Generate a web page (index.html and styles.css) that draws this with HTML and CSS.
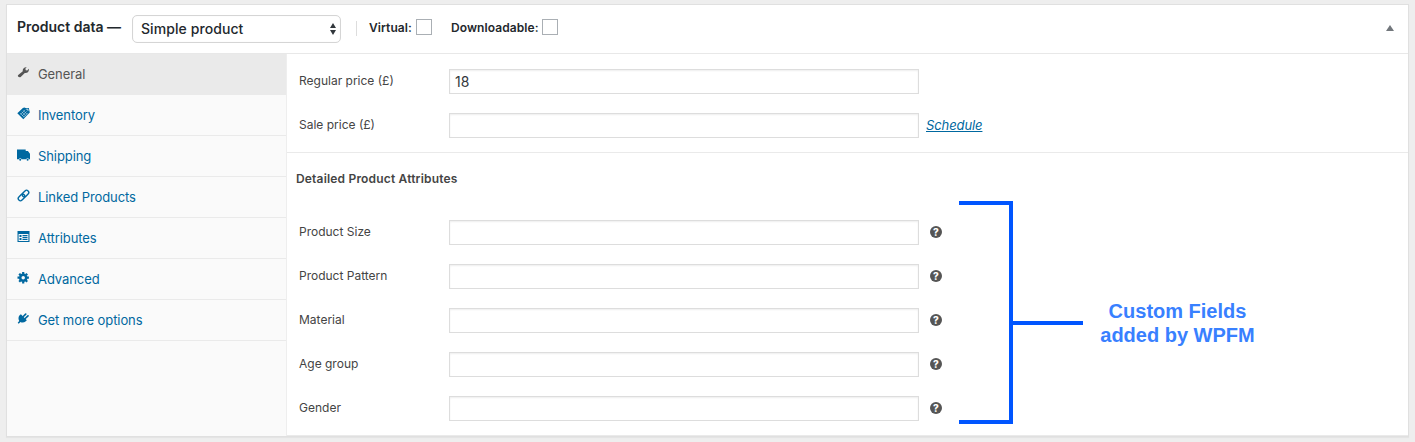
FILE: index.html
```html
<!DOCTYPE html>
<html lang="en">
<head>
  <meta charset="UTF-8" />
  <meta name="viewport" content="width=device-width, initial-scale=1.0"/>
  <title>Product data</title>
  <link rel="stylesheet" href="styles.css">
</head>
<body>

  <div class="postbox">
    <div class="header">
      <span class="title">Product data —</span>
      <div class="select">
        <span>Simple product</span>
        <svg width="6" height="12" viewBox="0 0 6 12"><path d="M3 0L6 5H0zM3 12L0 7H6z" fill="#32373c"/></svg>
      </div>
      <span class="divider"></span>
      <label class="check virtual"><span>Virtual:</span><input type="checkbox"></label>
      <label class="check downloadable"><span>Downloadable:</span><input type="checkbox"></label>
      <svg class="toggle" width="8" height="6" viewBox="0 0 8 6"><path d="M4 0L8 6H0z" fill="#72777c"/></svg>
    </div>

    <div class="inside">
      <ul class="tabs">
        <li class="active">
          <svg viewBox="0 0 13 13"><path d="M1.2 8.9L5.8 5.2C5.3 3 7.2.8 9.7 1.2L8.3 2.8 8.8 4.3 10.2 4.5 11.8 2.8C12.5 5.4 10.2 7.5 7.8 7L3.7 10.9C2.3 12-.1 10.3 1.2 8.9z"/></svg>
          <a>General</a>
        </li>
        <li>
          <svg viewBox="0 0 13 13"><path d="M.3 6.3L5.9.9 7.3.4 8.7 1 11.8 1 12.8 5.5 6.3 12.3z"/><path d="M3.1 6.1l4 4M4.6 4.7l4 4M6.1 3.3l4 4M3.6 7.4l4.6-4.6M5.1 8.9l4.6-4.6M6.6 10.3l4.2-4.4" stroke="#d5e5ee" stroke-width=".5" fill="none"/><path d="M9.1 2.2h1.9v1.9" stroke="#fff" stroke-width=".7" fill="none"/></svg>
          <a>Inventory</a>
        </li>
        <li>
          <svg viewBox="0 0 13 13"><path d="M0 1.4h8.7v1.7h2.2L13 5.8v5.4h-1a1.5 1.5 0 0 0-2.8 0H4.6a1.5 1.5 0 0 0-2.8 0H0z"/><circle cx="3.2" cy="11.8" r="1"/><circle cx="10.6" cy="11.8" r="1"/></svg>
          <a>Shipping</a>
        </li>
        <li>
          <svg viewBox="0 0 13 13"><g fill="none" stroke="#0068a0" stroke-width="1.4" transform="rotate(-45 6.5 6.5)"><rect x="0" y="4.3" width="7.4" height="4.4" rx="2.2"/><rect x="5.6" y="4.3" width="7.4" height="4.4" rx="2.2"/></g></svg>
          <a>Linked Products</a>
        </li>
        <li>
          <svg viewBox="0 0 13 13"><path fill-rule="evenodd" d="M.5 1h12v11H.5zM1.6 4v6.9h9.8V4z"/><path d="M2.5 5h2v2h-2zM2.5 8h2v2h-2zM5.5 5h5v1.2h-5zM5.5 7h5v1.2h-5zM5.5 9h5v1.1h-5z"/></svg>
          <a>Attributes</a>
        </li>
        <li>
          <svg viewBox="0 0 13 13"><circle cx="6.2" cy="6.7" r="3" fill="none" stroke="#0068a0" stroke-width="2.5"/><path d="M6.2 1v2M6.2 10.4v2M.5 6.7h2M9.9 6.7h2M2.2 2.7l1.4 1.4M8.8 9.3l1.4 1.4M2.2 10.7l1.4-1.4M8.8 4.1l1.4-1.4" stroke="#0068a0" stroke-width="2.2"/></svg>
          <a>Advanced</a>
        </li>
        <li>
          <svg viewBox="0 0 13 13"><path d="M2.6 3.2L3.9 2.2 9.8 8.2 8.8 9.3C7.2 10.6 5.1 10.9 3.5 10L1.7 11.7.7 10.7 2.2 8.9C1.2 7.2 1.2 4.8 2.6 3.2z"/><path d="M6.3 4.5L8.7 2.1M8.2 6.5L11 3.9" stroke="#0068a0" stroke-width="1.7" stroke-linecap="round"/></svg>
          <a>Get more options</a>
        </li>
      </ul>

      <div class="panel">
        <div class="group">
          <div class="field"><label>Regular price (£)</label><input type="text" value="18"></div>
          <div class="field"><label>Sale price (£)</label><input type="text"><a class="schedule">Schedule</a></div>
        </div>
        <div class="group custom">
          <h4>Detailed Product Attributes</h4>
          <div class="field"><label>Product Size</label><input type="text"><span class="help">?</span></div>
          <div class="field"><label>Product Pattern</label><input type="text"><span class="help">?</span></div>
          <div class="field"><label>Material</label><input type="text"><span class="help">?</span></div>
          <div class="field"><label>Age group</label><input type="text"><span class="help">?</span></div>
          <div class="field"><label>Gender</label><input type="text"><span class="help">?</span></div>

          <!-- callout over the custom fields -->
          <div class="callout">
            <div class="bracket"></div>
            <div class="stem"></div>
            <p>Custom Fields<br>added by WPFM</p>
          </div>
        </div>
      </div>
    </div>
  </div>

</body>
</html>
```
FILE: styles.css
```css
* {
  box-sizing: border-box;
}

body {
  background: #eee;
  font-family: Inter, "Liberation Sans", sans-serif;
  font-size: 13px;
  color: #444;
  margin: 0;
  padding: 4px 6px 5px;
  height: 442px;
  overflow: hidden;
}

.postbox {
  background: #fff;
  border: 1px solid #e0e0e0;
  box-shadow: 0 1px 1px rgba(0,0,0,0.04);
  height: 433px;
}

.header {
  display: flex;
  align-items: center;
  height: 49px;
  padding: 0 14px 0 10px;
  border-bottom: 1px solid #e8e8e8;
  color: #23282d;
  font-weight: 600;
}

.title {
  width: 115px;
  font-size: 14px;
  padding-bottom: 5px;
  white-space: nowrap;
}

.select {
  display: flex;
  align-items: center;
  justify-content: space-between;
  width: 209px;
  height: 28px;
  padding: 0 4px 0 8px;
  border: 1px solid #d5d5d5;
  border-radius: 5px;
  box-shadow: inset 0 0 1px rgba(0,0,0,0.1);
  font-size: 14px;
  font-weight: 500;
  letter-spacing: 0.08px;
}

.select span {
  padding-bottom: 2px;
}

.divider {
  width: 1px;
  height: 15px;
  margin: 0 12px 2px 15px;
  background: #ddd;
}

.check {
  display: flex;
  align-items: center;
  justify-content: space-between;
  font-size: 12px;
  letter-spacing: 0.08px;
  padding-bottom: 3px;
}

.virtual { width: 63px; }
.downloadable { width: 107px; margin-left: 19px; }

.check input {
  appearance: none;
  width: 16px;
  height: 16px;
  margin: 0 0 2px;
  border: 1px solid #aaafb4;
  background: #fff;
}

.toggle {
  margin: 0 0 2px auto;
}

.inside {
  display: flex;
  height: 382px;
}

.tabs {
  width: 280px;
  margin: 0;
  padding: 0;
  list-style: none;
  background: #fafafa;
  border-right: 1px solid #eee;
}

.tabs li {
  display: flex;
  align-items: center;
  height: 41px;
  padding-left: 10px;
  border-bottom: 1px solid #eaeaea;
  color: #0068a0;
  letter-spacing: -0.08px;
}

.tabs svg {
  width: 13px;
  height: 13px;
  margin: 0 8px 3px 0;
  fill: #0068a0;
}

.tabs a {
  line-height: 20px;
}

.tabs .active {
  background: #eaeaea;
  color: #555;
}

.tabs .active svg {
  fill: #555;
}

.panel {
  flex: 1;
}

.group {
  padding: 15px 0 14px 12px;
  border-bottom: 1px solid #eaeaea;
}

.field {
  display: flex;
  align-items: center;
  height: 25px;
  margin-bottom: 19px;
}

.field:last-of-type,
.custom .field:nth-of-type(5) {
  margin-bottom: 0;
}

.field label {
  width: 150px;
  font-size: 12px;
  padding-bottom: 2px;
}

.field input {
  width: 470px;
  height: 25px;
  padding: 0 5px;
  border: 1px solid #ddd;
  box-shadow: inset 0 1px 2px rgba(0,0,0,0.07);
  font-family: inherit;
  font-size: 14px;
  color: #32373c;
}

.schedule {
  margin-left: 7px;
  padding-bottom: 2px;
  font-style: italic;
  text-decoration: underline;
  letter-spacing: -0.1px;
  color: #0068a0;
}

.custom {
  position: relative;
  padding-top: 0;
}

.custom h4 {
  height: 67px;
  margin: 0 0 0 -3px;
  font-size: 12px;
  font-weight: 600;
  letter-spacing: 0.18px;
  line-height: 51px;
}

.help {
  width: 12px;
  height: 12px;
  margin: 0 0 2px 11px;
  border-radius: 50%;
  background: #555;
  color: #fff;
  font-size: 10px;
  font-weight: 800;
  line-height: 12px;
  text-align: center;
}

.callout {
  position: absolute;
  left: 672px;
  top: 48px;
  display: flex;
  align-items: center;
  height: 223px;
}

.bracket {
  width: 54px;
  height: 223px;
  border: 4px solid #0055ff;
  border-left: none;
}

.stem {
  width: 70px;
  height: 4px;
  margin-bottom: -21px;
  background: #0055ff;
}

.callout p {
  width: 189px;
  margin: 20px 0 0;
  font-family: "Liberation Sans", Arial, sans-serif;
  font-size: 20px;
  font-weight: bold;
  line-height: 24px;
  text-align: center;
  color: #3880ff;
}
```
